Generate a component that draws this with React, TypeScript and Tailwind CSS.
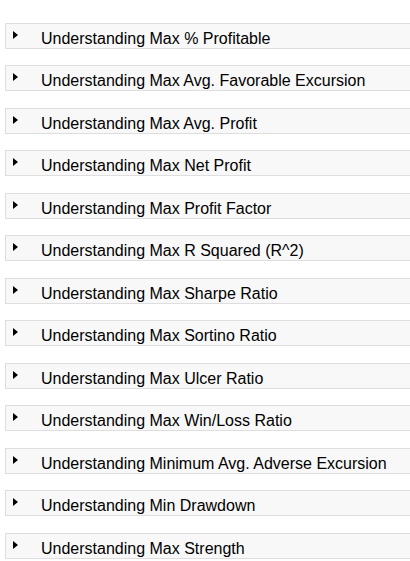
import React from 'react';

const items = [
  'Understanding Max % Profitable',
  'Understanding Max Avg. Favorable Excursion',
  'Understanding Max Avg. Profit',
  'Understanding Max Net Profit',
  'Understanding Max Profit Factor',
  'Understanding Max R Squared (R^2)',
  'Understanding Max Sharpe Ratio',
  'Understanding Max Sortino Ratio',
  'Understanding Max Ulcer Ratio',
  'Understanding Max Win/Loss Ratio',
  'Understanding Minimum Avg. Adverse Excursion',
  'Understanding Min Drawdown',
  'Understanding Max Strength',
];

const Row = ({ label, index }: { label: string; index: number }) => (
  <div
    className={`flex h-[26px] w-[420px] items-center border border-[#dedede] bg-[#f8f8f8] ${
      index % 2 === 0 ? 'mb-[16px]' : 'mb-[17px]'
    }`}
  >
    <svg width="5" height="8" viewBox="0 0 5 8" className="ml-[7px] mt-[-3px] shrink-0">
      <path d="M0 0 L5 4 L0 8 Z" fill="#000" />
    </svg>
    <span className="ml-[23px] mt-[5px] text-[16px] leading-none text-black">{label}</span>
  </div>
);

export default function App() {
  return (
    <div
      className="h-[561px] w-[410px] overflow-hidden bg-white pl-[5px] pt-[23px]"
      style={{ fontFamily: '"Liberation Sans", Arial, sans-serif' }}
    >
      {items.map((label, i) => (
        <Row key={label} label={label} index={i} />
      ))}
    </div>
  );
}
